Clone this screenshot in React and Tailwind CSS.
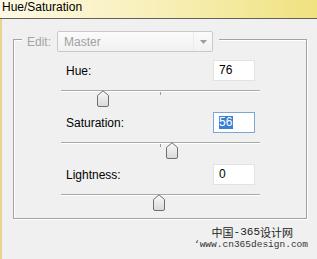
import React from "react";

const SANS = { fontFamily: '"Liberation Sans", Arial, sans-serif' };

function Thumb() {
  return (
    <svg width="12" height="17" viewBox="0 0 12 17">
      <defs>
        <linearGradient id="thumbFill" x1="0" y1="0" x2="0" y2="1">
          <stop offset="0" stopColor="#fafafa" />
          <stop offset="1" stopColor="#d9d9d9" />
        </linearGradient>
      </defs>
      <path
        d="M0.5 15V5.5L6 0.8L11.5 5.5V15Q11.5 16.5 10 16.5H2Q0.5 16.5 0.5 15Z"
        fill="url(#thumbFill)"
        stroke="#6f6f6f"
      />
    </svg>
  );
}

function Slider({ left }) {
  return (
    <div className="relative ml-[47px] mt-[9px] h-[17px] w-[199px]">
      <div className="mt-[7px] h-[2px] w-full border-t border-[#a9a9a9] bg-transparent border-b border-b-white" />
      <div className="ml-[99px] h-[3px] w-px bg-[#9a9a9a]" />
      <div className="absolute top-0" style={{ left }}>
        <Thumb />
      </div>
    </div>
  );
}

function Row({ label, value, active, thumb, first }) {
  return (
    <div className={first ? "mt-[8px]" : "mt-[5px]"}>
      <div className="flex items-center pl-[52px]">
        <span className="w-[147px] text-[12px] leading-[14px] text-black">{label}</span>
        <div
          className={
            "flex h-[21px] w-[42px] items-center bg-white pl-[5px] text-[12px] leading-[13px] text-black border " +
            (active ? "border-[#7ea6d4]" : "border-[#e2e2e2]")
          }
        >
          {active ? <span className="bg-[#3a7fd3] pr-px text-white">{value}</span> : value}
        </div>
      </div>
      <Slider left={thumb} />
    </div>
  );
}

export default function App() {
  return (
    <div className="h-[259px] w-[317px] overflow-hidden bg-[#f0f0f0]" style={SANS}>
      <div className="h-[19px] border-b border-[#626258] bg-gradient-to-r from-[#fdf9e4] via-[#f8efb8] to-[#efe27f] pl-[2px] text-[12px] leading-[14px] text-black">
        Hue/Saturation
      </div>
      <div className="flex h-[240px]">
        <div className="w-[2px] bg-[#e6d58c]" />
        <div className="flex-1">
          <div className="ml-[11px] mt-[20px] h-[180px] w-[294px] border border-[#a3a3a3] shadow-[inset_1px_1px_0_#ffffff,1px_1px_0_#ffffff]">
            <div className="-mt-[9px] ml-[8px] flex h-[21px] w-fit items-center bg-[#f0f0f0] pr-[6px]">
              <span className="w-[35px] pl-[5px] text-[12px] leading-[14px] text-[#a3a3a3]">Edit:</span>
              <div className="flex h-[21px] w-[156px] items-center rounded-[2px] border border-[#c9c9c9] bg-gradient-to-b from-[#fbfbfb] to-[#f1f1f1]">
                <span className="flex-1 pl-[6px] text-[12px] leading-[14px] text-[#a0a0a0]">Master</span>
                <div className="flex h-full w-[19px] items-center justify-center border-l border-[#ececec]">
                  <svg width="7" height="4" viewBox="0 0 7 4">
                    <path d="M0 0H7L3.5 4Z" fill="#9d9d9d" />
                  </svg>
                </div>
              </div>
            </div>
            <Row first label="Hue:" value="76" thumb={36} />
            <Row label="Saturation:" value="56" active thumb={105} />
            <Row label="Lightness:" value="0" thumb={92} />
          </div>
          <div className="mt-[8px] flex justify-end pr-[24px] text-[11px] leading-[11px] text-[#222]" style={{ fontFamily: '"Noto Sans CJK SC", sans-serif' }}>
            <span>中国</span>
            <span style={{ fontFamily: '"Liberation Mono", monospace' }}>-365</span>
            <span>设计网</span>
          </div>
          <div className="mt-px flex items-center justify-end pr-[9px] text-[9.5px] leading-[11px] text-[#333]" style={{ fontFamily: '"Liberation Mono", monospace' }}>
            ‘www.cn365design.com
          </div>
        </div>
      </div>
    </div>
  );
}
